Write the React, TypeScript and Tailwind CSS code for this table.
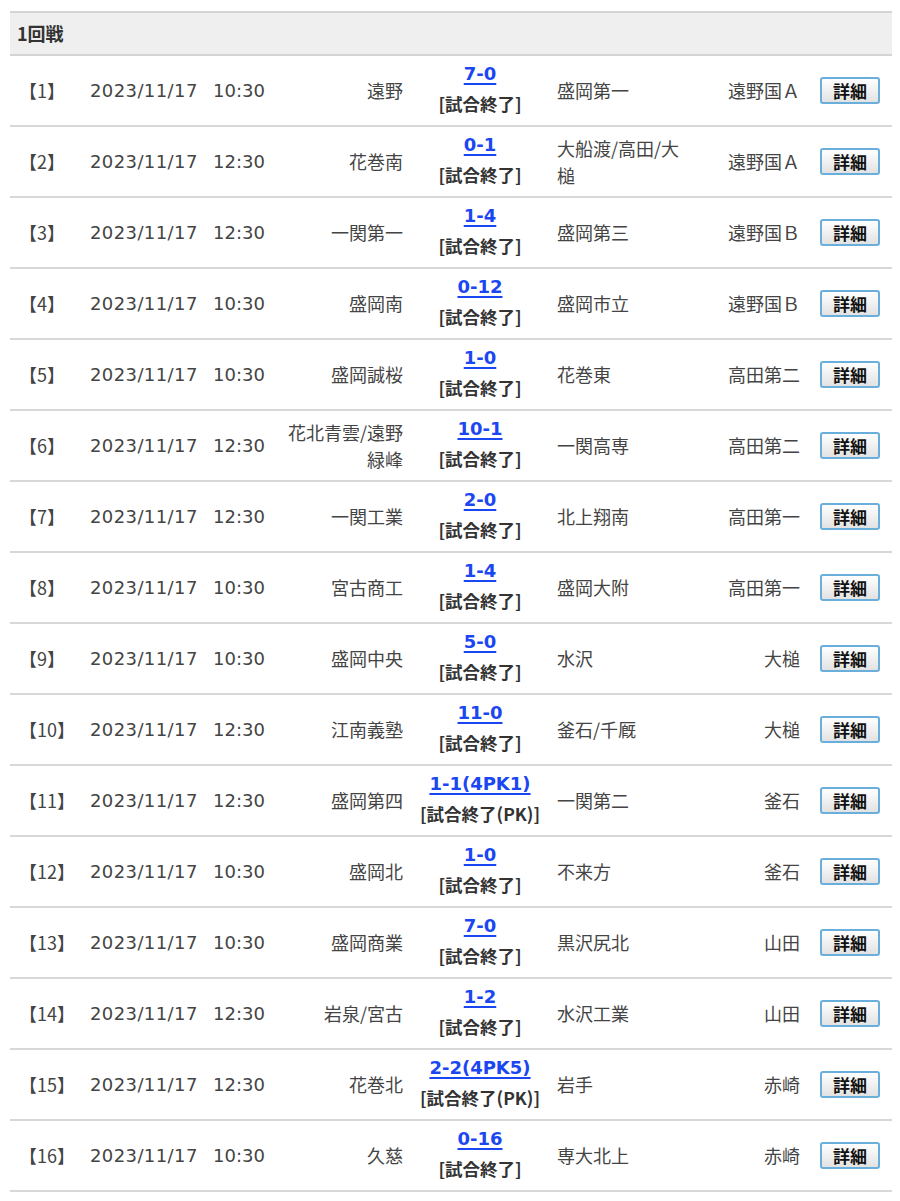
type Match = {
  no: number
  date: string
  time: string
  home: string
  score: string
  pk?: boolean
  away: string
  venue: string
}

const matches: Match[] = [
  { no: 1, date: '2023/11/17', time: '10:30', home: '遠野', score: '7-0', away: '盛岡第一', venue: '遠野国Ａ' },
  { no: 2, date: '2023/11/17', time: '12:30', home: '花巻南', score: '0-1', away: '大船渡/高田/大槌', venue: '遠野国Ａ' },
  { no: 3, date: '2023/11/17', time: '12:30', home: '一関第一', score: '1-4', away: '盛岡第三', venue: '遠野国Ｂ' },
  { no: 4, date: '2023/11/17', time: '10:30', home: '盛岡南', score: '0-12', away: '盛岡市立', venue: '遠野国Ｂ' },
  { no: 5, date: '2023/11/17', time: '10:30', home: '盛岡誠桜', score: '1-0', away: '花巻東', venue: '高田第二' },
  { no: 6, date: '2023/11/17', time: '12:30', home: '花北青雲/遠野緑峰', score: '10-1', away: '一関高専', venue: '高田第二' },
  { no: 7, date: '2023/11/17', time: '12:30', home: '一関工業', score: '2-0', away: '北上翔南', venue: '高田第一' },
  { no: 8, date: '2023/11/17', time: '10:30', home: '宮古商工', score: '1-4', away: '盛岡大附', venue: '高田第一' },
  { no: 9, date: '2023/11/17', time: '10:30', home: '盛岡中央', score: '5-0', away: '水沢', venue: '大槌' },
  { no: 10, date: '2023/11/17', time: '12:30', home: '江南義塾', score: '11-0', away: '釜石/千厩', venue: '大槌' },
  { no: 11, date: '2023/11/17', time: '12:30', home: '盛岡第四', score: '1-1(4PK1)', pk: true, away: '一関第二', venue: '釜石' },
  { no: 12, date: '2023/11/17', time: '10:30', home: '盛岡北', score: '1-0', away: '不来方', venue: '釜石' },
  { no: 13, date: '2023/11/17', time: '10:30', home: '盛岡商業', score: '7-0', away: '黒沢尻北', venue: '山田' },
  { no: 14, date: '2023/11/17', time: '12:30', home: '岩泉/宮古', score: '1-2', away: '水沢工業', venue: '山田' },
  { no: 15, date: '2023/11/17', time: '12:30', home: '花巻北', score: '2-2(4PK5)', pk: true, away: '岩手', venue: '赤崎' },
  { no: 16, date: '2023/11/17', time: '10:30', home: '久慈', score: '0-16', away: '専大北上', venue: '赤崎' },
]

const jp = "font-['Noto_Sans_CJK_JP','Noto_Sans',sans-serif]"
const num = "font-['DejaVu_Sans','Noto_Sans_CJK_JP',sans-serif]"

export default function App() {
  return (
    <div className={`bg-white pl-[10px] pr-[8px] pt-[11px] text-[#444] ${jp}`}>
      <table className="w-full table-fixed border-collapse">
        <colgroup>
          <col className="w-[70px]" />
          <col className="w-[200px]" />
          <col className="w-[130px]" />
          <col className="w-[140px]" />
          <col className="w-[150px]" />
          <col className="w-[110px]" />
          <col />
        </colgroup>
        <thead>
          <tr className="border-y-2 border-[#d4d4d4] bg-[#efefef]">
            <th colSpan={7} className="h-[43px] pl-[7px] text-left text-[18px] font-bold text-[#333]">
              1回戦
            </th>
          </tr>
        </thead>
        <tbody>
          {matches.map((m) => (
            <tr key={m.no} className="border-b-2 border-[#d8d8d8]">
              <td className="h-[71px] pl-[9px] text-[18px] leading-[27px]">【{m.no}】</td>
              <td className={`pl-[10px] text-[18px] leading-[27px] ${num}`}>
                <span className="inline-block w-[123px] tracking-[0.4px]">{m.date}</span>
                <span>{m.time}</span>
              </td>
              <td className="pl-[6px] pr-[7px] text-right text-[18px] leading-[27px]">{m.home}</td>
              <td className="text-center">
                <div className="mb-[8px] leading-[18px]">
                  <a
                    href="#"
                    className={`text-[18px] font-bold text-[#1b47f2] underline decoration-2 underline-offset-[3px] ${num}`}
                  >
                    {m.score}
                  </a>
                </div>
                <div className="text-[17.5px] font-bold leading-[26px] text-[#333]">
                  {m.pk ? '[試合終了(PK)]' : '[試合終了]'}
                </div>
              </td>
              <td className="pl-[7px] pr-[8px] text-left text-[18px] leading-[27px]">{m.away}</td>
              <td className="pr-[10px] text-right text-[18px] leading-[27px]">{m.venue}</td>
              <td className="pl-[10px]">
                <button className="flex h-[27px] w-[60px] items-center justify-center rounded-[3px] border-2 border-[#6aaedb] bg-gradient-to-b from-white to-[#e2e2e2] text-[17px] font-bold leading-none text-[#111]">
                  詳細
                </button>
              </td>
            </tr>
          ))}
        </tbody>
      </table>
    </div>
  )
}
